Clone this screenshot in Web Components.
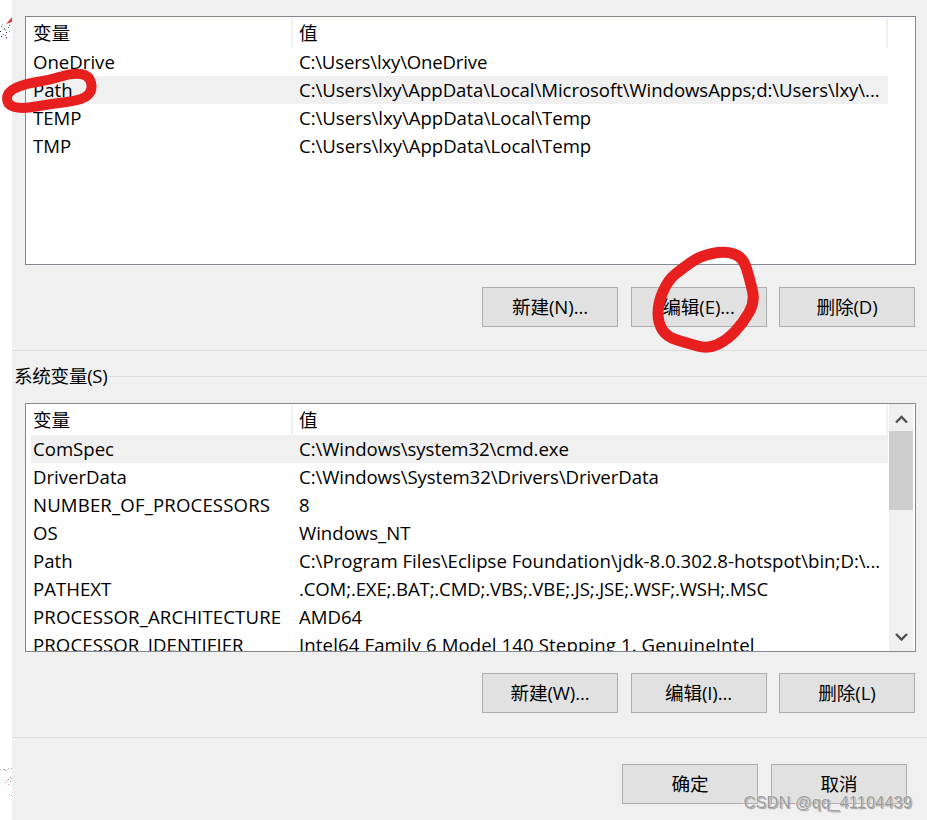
<!DOCTYPE html>
<html>
<head>
<meta charset="utf-8">
<title>环境变量</title>
<style>
  html, body { margin: 0; background: #fff; }
  body { font-family: "Open Sans", "Noto Sans CJK SC", sans-serif; }
</style>
</head>
<body>
<env-dialog>
  <env-list slot="user" first>
    <env-row name="OneDrive" value="C:\Users\lxy\OneDrive" value-sp="-.18"></env-row>
    <env-row name="Path" value="C:\Users\lxy\AppData\Local\Microsoft\WindowsApps;d:\Users\lxy\..." value-sp="-.06" selected></env-row>
    <env-row name="TEMP" value="C:\Users\lxy\AppData\Local\Temp" value-sp="-.03"></env-row>
    <env-row name="TMP" value="C:\Users\lxy\AppData\Local\Temp" value-sp="-.03"></env-row>
  </env-list>
  <env-buttons slot="user-actions">
    <env-button>新建(N)...</env-button>
    <env-button>编辑(E)...</env-button>
    <env-button>删除(D)</env-button>
  </env-buttons>

  <env-list slot="system" scroll>
    <env-row name="ComSpec" value="C:\Windows\system32\cmd.exe" value-sp="-.07" selected></env-row>
    <env-row name="DriverData" value="C:\Windows\System32\Drivers\DriverData" value-sp="-.08"></env-row>
    <env-row name="NUMBER_OF_PROCESSORS" name-sp=".15" value="8"></env-row>
    <env-row name="OS" value="Windows_NT"></env-row>
    <env-row name="Path" value="C:\Program Files\Eclipse Foundation\jdk-8.0.302.8-hotspot\bin;D:\..."></env-row>
    <env-row name="PATHEXT" value=".COM;.EXE;.BAT;.CMD;.VBS;.VBE;.JS;.JSE;.WSF;.WSH;.MSC" value-sp="-.15"></env-row>
    <env-row name="PROCESSOR_ARCHITECTURE" name-sp=".13" value="AMD64"></env-row>
    <env-row name="PROCESSOR_IDENTIFIER" name-sp=".1" value="Intel64 Family 6 Model 140 Stepping 1, GenuineIntel" value-sp=".12"></env-row>
  </env-list>
  <env-buttons slot="system-actions">
    <env-button>新建(W)...</env-button>
    <env-button>编辑(I)...</env-button>
    <env-button>删除(L)</env-button>
  </env-buttons>

  <env-button slot="ok">确定</env-button>
  <env-button slot="cancel">取消</env-button>
</env-dialog>
<red-marks></red-marks>

<script>
class EnvDialog extends HTMLElement {
  connectedCallback() {
    const shadow = this.attachShadow({ mode: "open" });
    shadow.innerHTML = `
      <style>
        :host { display: block; margin-left: 12px; height: 820px; background: #f0f0f0; color: #000; overflow: hidden;
                font: 18.6px "Open Sans", "Noto Sans CJK SC", sans-serif; }
        .top { padding: 16px 11px 0 13px; }
        .actions { padding: 22px 1px 0 0; }
        hr { margin: 0; border: 0; height: 1px; background: #dcdcdc; }
        .sep1 { margin-top: 23px; }
        .group { display: flex; align-items: center; height: 26px; margin-top: 12px; }
        .group span { padding-left: 2px; line-height: 26px; letter-spacing: -.3px; }
        .group i { flex: 1; height: 1px; margin-left: 2px; background: #dcdcdc; }
        .system { padding: 14px 11px 0 13px; }
        .sep2 { margin-top: 24px; }
        .footer { display: flex; justify-content: flex-end; gap: 13px; padding: 26px 20px 0 0; }
      </style>
      <div class="top">
        <slot name="user"></slot>
        <div class="actions"><slot name="user-actions"></slot></div>
      </div>
      <hr class="sep1">
      <div class="group"><span>系统变量(S)</span><i></i></div>
      <div class="system">
        <slot name="system"></slot>
        <div class="actions" style="padding-top:21px"><slot name="system-actions"></slot></div>
      </div>
      <hr class="sep2">
      <div class="footer"><slot name="ok"></slot><slot name="cancel"></slot></div>
    `;
  }
}

class EnvList extends HTMLElement {
  connectedCallback() {
    const shadow = this.attachShadow({ mode: "open" });
    const bar = this.hasAttribute("scroll") ? `
      <div class="bar">
        <svg width="24" height="24" viewBox="0 0 24 24"><path d="M7 15.5 12.5 10 18 15.5" fill="none" stroke="#505050" stroke-width="2.4"/></svg>
        <div class="thumb"></div>
        <svg class="down" width="24" height="24" viewBox="0 0 24 24"><path d="M7 10 12.5 15.5 18 10" fill="none" stroke="#505050" stroke-width="2.4"/></svg>
      </div>` : "";
    shadow.innerHTML = `
      <style>
        :host { display: block; position: relative; box-sizing: border-box; height: 249px; border: 1px solid #828790; background: #fff; overflow: hidden; }
        .head { display: grid; grid-template-columns: 262px 1fr; height: 31px; margin: 0 27px 0 5px; line-height: 31px; }
        .head div { padding-left: 2px; border-right: 2px solid #f0f0f0; height: 30px; margin-top: 1px; line-height: 30px; }
        .head div + div { padding-left: 6px; border-right: 2px solid #f0f0f0; }
        .body { margin: 0 27px 0 5px; }
        .bar { position: absolute; top: 0; bottom: 0; right: 2px; width: 24px; background: #f0f0f0; display: flex; flex-direction: column; }
        .bar svg { flex: none; margin-top: 3px; }
        .bar .thumb { height: 79px; background: #cdcdcd; margin-top: 0; }
        .bar .down { margin-top: auto; margin-bottom: 3px; }
      </style>
      <div class="head"><div>变量</div><div>值</div></div>
      <div class="body"><slot></slot></div>
      ${bar}
    `;
  }
}

class EnvRow extends HTMLElement {
  connectedCallback() {
    const shadow = this.attachShadow({ mode: "open" });
    const nameSp = this.getAttribute("name-sp") || 0;
    const valueSp = this.getAttribute("value-sp") || 0;
    shadow.innerHTML = `
      <style>
        :host { display: grid; grid-template-columns: 262px 1fr; height: 28px; line-height: 28px; white-space: nowrap; }
        :host([selected]) { background: #f0f0f0; }
        span { padding-left: 2px; overflow: hidden; }
        span + span { padding-left: 6px; }
      </style>
      <span style="letter-spacing:${nameSp}px">${this.getAttribute("name")}</span>
      <span style="letter-spacing:${valueSp}px">${this.getAttribute("value")}</span>
    `;
  }
}

class EnvButtons extends HTMLElement {
  connectedCallback() {
    const shadow = this.attachShadow({ mode: "open" });
    shadow.innerHTML = `
      <style>:host { display: flex; justify-content: flex-end; gap: 12.5px; }</style>
      <slot></slot>
    `;
  }
}

class EnvButton extends HTMLElement {
  connectedCallback() {
    const shadow = this.attachShadow({ mode: "open" });
    shadow.innerHTML = `
      <style>
        :host { display: flex; align-items: center; justify-content: center; box-sizing: border-box; width: 136px; height: 40px;
                padding-bottom: 3px; border: 1px solid #adadad; background: #e1e1e1; white-space: nowrap; letter-spacing: -.1px; }
      </style>
      <slot></slot>
    `;
  }
}

// hand annotations and the stray pixels on the left edge of the capture
class RedMarks extends HTMLElement {
  smooth(points) {
    // closed curve through the midpoints of the given points
    const mid = (a, b) => [(a[0] + b[0]) / 2, (a[1] + b[1]) / 2];
    const n = points.length;
    let d = "M" + mid(points[n - 1], points[0]).join(" ");
    points.forEach((p, i) => {
      d += " Q" + p.join(" ") + " " + mid(p, points[(i + 1) % n]).join(" ");
    });
    return d + "Z";
  }

  dots(color, list) {
    return list.map(([x, y]) => `<rect x="${x}" y="${y}" width="1" height="1" fill="${color}"/>`).join("");
  }

  connectedCallback() {
    const shadow = this.attachShadow({ mode: "open" });
    const path = this.smooth([[7,92],[24,84],[50,80],[72,73],[89,75],[93,90],[83,100],[50,104],[22,109],[7,105]]);
    const circle = this.smooth([[725,251],[743,257],[750,280],[755,302],[743,323],[727,340],[708,349],[687,343],[667,337],[658,323],[658,303],[668,280],[683,268],[700,256]]);
    const specks = this.dots("#a9b0a8", [[2,24],[5,30],[9,31],[6,38],[0,769],[8,768],[11,768],[10,777],[5,782],[9,794],[11,795]])
      + this.dots("#e08aa8", [[3,769],[4,769],[5,770],[7,780],[8,779],[10,781],[11,778],[8,784]])
      + this.dots("#e0303a", [[1,26],[5,35],[6,37],[9,25]])
      + this.dots("#3fa860", [[4,28],[4,29],[8,27],[3,34]])
      + this.dots("#303030", [[0,31],[6,32],[1,36]]);
    shadow.innerHTML = `
      <style>
        :host { display: block; position: absolute; inset: 0; width: 927px; height: 820px; pointer-events: none; }
        svg { position: absolute; left: 0; top: 0; }
        .mark { position: absolute; right: 15px; top: 793px; font: 16.4px "Liberation Sans", sans-serif; letter-spacing: .1px; color: #999; text-shadow: 0 0 2px #fff, 0 0 1px #fff, 1px 1px 1px #777; white-space: nowrap; }
      </style>
      <svg width="927" height="820" viewBox="0 0 927 820">
        <path d="${path}" fill="none" stroke="#e81f1f" stroke-width="10" stroke-linejoin="round"/>
        <path d="${circle}" fill="none" stroke="#e81f1f" stroke-width="11" stroke-linejoin="round"/>
        <path d="M6 24 12 17V22Z" fill="#e0403a"/>
        ${specks}
      </svg>
      <div class="mark">CSDN @qq_41104439</div>
    `;
  }
}

customElements.define("env-dialog", EnvDialog);
customElements.define("env-list", EnvList);
customElements.define("env-row", EnvRow);
customElements.define("env-buttons", EnvButtons);
customElements.define("env-button", EnvButton);
customElements.define("red-marks", RedMarks);
</script>
</body>
</html>
